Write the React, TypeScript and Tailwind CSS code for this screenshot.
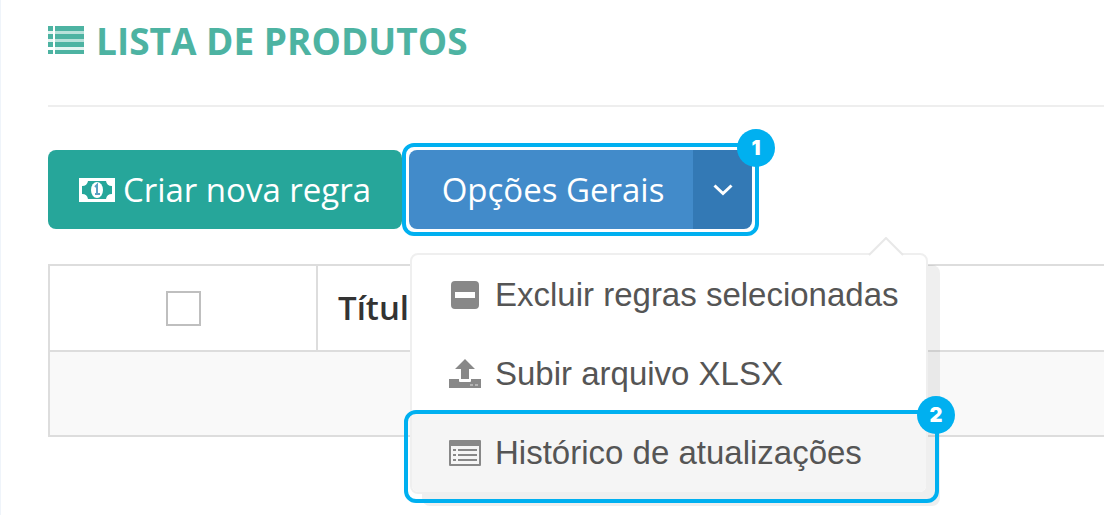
import type { ReactNode } from 'react'

function ListIcon() {
  return (
    <svg width="36" height="29" viewBox="0 0 36 29" fill="currentColor" aria-hidden="true">
      <path d="M0 0h5v5H0zM7 0h29v5H7zM0 8h5v5H0zM7 8h29v5H7zM0 16h5v5H0zM7 16h29v5H7zM0 24h5v4H0zM7 24h29v4H7z" />
      <path d="M7 5h29v3H7zM7 13h29v3H7z" opacity="0.4" />
      <path d="M0 5h5v3H0zM0 13h5v3H0zM7 21h29v3H7z" opacity="0.15" />
    </svg>
  )
}

function MoneyIcon() {
  return (
    <svg width="36" height="24" viewBox="0 0 36 24" aria-hidden="true">
      <path
        fill="currentColor"
        fillRule="evenodd"
        d="M0 0h36v24H0zM9 3a6 6 0 0 1-6 5v8a6 6 0 0 1 6 5h18a6 6 0 0 1 6-5V8a6 6 0 0 1-6-5z"
      />
      <ellipse cx="18" cy="12" rx="6" ry="8" fill="currentColor" />
      <path d="M16 9l2-2v9M16 16h5" fill="none" stroke="#5c9fc4" strokeWidth="2" />
    </svg>
  )
}

function ChevronIcon() {
  return (
    <svg width="20" height="12" viewBox="0 0 20 12" fill="none" stroke="currentColor" strokeWidth="3" aria-hidden="true">
      <path d="M1.500 1.500 10 9.500l8.500-8" />
    </svg>
  )
}

function MinusSquareIcon() {
  return (
    <svg width="32" height="28" viewBox="0 0 32 28" aria-hidden="true">
      <path
        fill="currentColor"
        fillRule="evenodd"
        d="M6 0h20a4 4 0 0 1 4 4v20a4 4 0 0 1-4 4H6a4 4 0 0 1-4-4V4a4 4 0 0 1 4-4zM6 11v6h20v-6z"
      />
    </svg>
  )
}

function UploadIcon() {
  return (
    <svg width="32" height="30" viewBox="0 0 32 30" fill="currentColor" aria-hidden="true">
      <path d="M16 0 6 10h6v10h8V10h6z" />
      <path d="M0 20h10v2a1 1 0 0 0 1 1h10a1 1 0 0 0 1-1v-2h10v9H0z" />
      <path d="M21 25h3v2h-3zM26 25h3v2h-3z" fill="#b4b4b4" />
    </svg>
  )
}

function ListAltIcon() {
  return (
    <svg width="32" height="26" viewBox="0 0 32 26" aria-hidden="true">
      <path
        fill="currentColor"
        fillRule="evenodd"
        d="M1 0h30a1 1 0 0 1 1 1v24a1 1 0 0 1-1 1H1a1 1 0 0 1-1-1V1a1 1 0 0 1 1-1zM2 6v18h28V6z"
      />
      <path
        d="M4 10h3M9 10h19M4 15h3M9 15h19M4 20h3M9 20h19"
        stroke="currentColor"
        strokeWidth="2"
      />
    </svg>
  )
}

function Badge({ children }: { children: ReactNode }) {
  return (
    <span className="absolute -top-[18px] -right-5 flex size-[38px] items-center justify-center rounded-full bg-[#00b0f0] font-['Inter',sans-serif] text-xl font-black text-white">
      {children}
    </span>
  )
}

const menuItems = [
  { label: 'Excluir regras selecionadas', icon: <MinusSquareIcon /> },
  { label: 'Subir arquivo XLSX', icon: <UploadIcon /> },
  { label: 'Histórico de atualizações', icon: <ListAltIcon />, step: 2 },
]

export default function App() {
  return (
    <main className="min-h-screen overflow-hidden border-l border-[#eff4fa] bg-white pl-[47px] font-['Open_Sans',sans-serif]">
      <header className="flex h-[107px] items-start gap-3 border-b-2 border-[#eeeeee] pt-4 text-[#4db3a2]">
        <span className="pt-[10px]">
          <ListIcon />
        </span>
        <h1 className="text-[37px] leading-[50px] font-bold">LISTA DE PRODUTOS</h1>
      </header>

      <div className="mt-9 flex items-center">
        <button
          type="button"
          className="flex h-[79px] w-[354px] items-center justify-center gap-2 rounded-lg bg-[#26a69a] text-[33px] text-white"
        >
          <MoneyIcon />
          Criar nova regra
        </button>

        {/* Split button + dropdown */}
        <div className="relative rounded-xl border-4 border-[#00b0f0] p-[3px]">
          <div className="flex h-[79px] overflow-hidden rounded-lg text-white">
            <button type="button" className="w-[284px] bg-[#428bca] pl-1 text-[33px]">
              Opções Gerais
            </button>
            <button
              type="button"
              aria-label="Abrir opções"
              className="flex w-[59px] items-center justify-center bg-[#3379b5]"
            >
              <ChevronIcon />
            </button>
          </div>
          <Badge>1</Badge>

          <ul className="absolute top-[106px] left-1 z-10 w-[518px] rounded-lg border-2 border-[#efefef] bg-white font-['Liberation_Sans',sans-serif] text-[33px] text-[#555555] shadow-[12px_12px_0_rgba(102,102,102,0.1)]">
            <svg
              className="absolute -top-[18px] right-[22px]"
              width="36"
              height="19"
              viewBox="0 0 36 19"
              aria-hidden="true"
            >
              <path d="M1 18 18 1l17 17" fill="#fff" stroke="#e8e8e8" strokeWidth="2" />
            </svg>
            {menuItems.map((item) => (
              <li key={item.label} className="relative">
                <a
                  href="#"
                  className={
                    item.step
                      ? 'flex h-[79px] items-center gap-[14px] rounded-b-md bg-[#f5f5f5] pl-[37px]'
                      : 'flex h-[79px] items-center gap-[14px] pl-[37px]'
                  }
                >
                  <span className="text-[#888888]">{item.icon}</span>
                  {item.label}
                </a>
                {item.step && (
                  <div className="pointer-events-none absolute -top-[3px] -right-[13px] -bottom-[11px] -left-2 rounded-xl border-4 border-[#00b0f0]">
                    <Badge>{item.step}</Badge>
                  </div>
                )}
              </li>
            ))}
          </ul>
        </div>
      </div>

      <table className="mt-7 w-full border-collapse border-2 border-r-0 border-[#dddddd]">
        <thead>
          <tr className="h-[86px] border-b-2 border-[#dddddd]">
            <th className="w-[268px] border-r-2 border-[#dddddd]">
              <input
                type="checkbox"
                aria-label="Selecionar todos"
                className="mx-auto block size-[35px] appearance-none border-2 border-[#bfbfbf] bg-white"
              />
            </th>
            <th className="pl-5 text-left text-[33px] font-semibold text-[#333333]">Título</th>
          </tr>
        </thead>
        <tbody>
          <tr className="h-[85px] bg-[#f9f9f9]">
            <td colSpan={2} />
          </tr>
        </tbody>
      </table>
    </main>
  )
}
